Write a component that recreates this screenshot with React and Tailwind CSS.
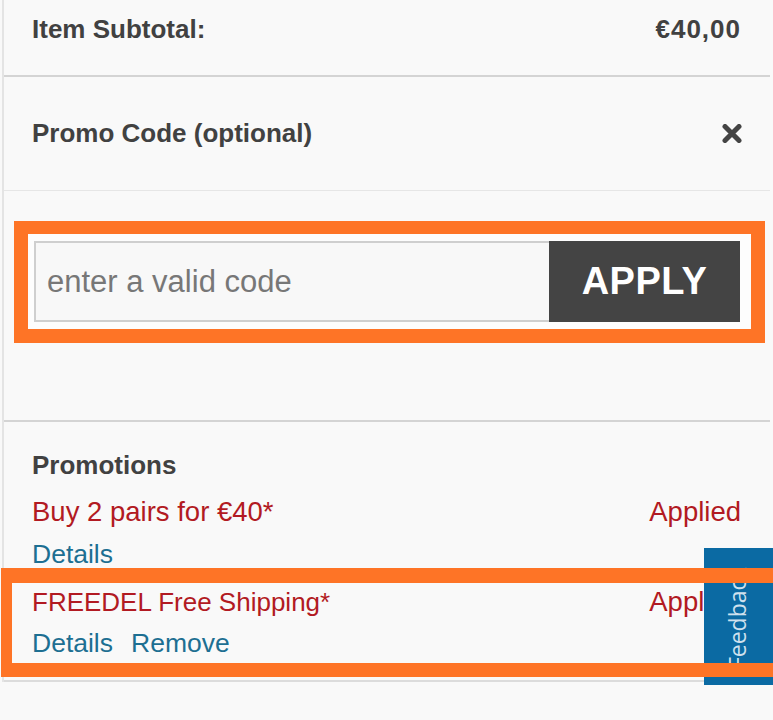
function CloseIcon() {
  return (
    <svg width="20" height="19" viewBox="0 0 20 19" className="block">
      <path
        d="M3 2.5 L17 16.5 M17 2.5 L3 16.5"
        stroke="#444444"
        strokeWidth="5"
        strokeLinecap="round"
      />
    </svg>
  );
}

export default function App() {
  return (
    <div className="relative h-[720px] w-full overflow-hidden bg-[#f9f9f9] font-['Liberation_Sans',Arial,sans-serif]">
      <div className="ml-[2px] mr-[3px] border-l-2 border-[#e4e4e4]">
        {/* subtotal */}
        <div className="flex h-[75px] items-start justify-between pl-[28px] pr-[29px] pt-[13px] text-[26px] font-bold leading-[32px] text-[#414141]">
          <span>Item Subtotal:</span>
          <span className="tracking-[1px]">€40,00</span>
        </div>
        <div className="h-[2px] bg-[#d4d4d4]" />

        {/* promo code header */}
        <div className="flex h-[113px] items-center justify-between pl-[28px] pr-[28px] text-[26px] font-bold text-[#414141]">
          <span>Promo Code (optional)</span>
          <CloseIcon />
        </div>
        <div className="h-[1px] bg-[#e6e6e6]" />

        {/* code input */}
        <div className="h-[229px] pt-[30px]">
          <div className="ml-[10px] mr-[5px] border-[14px] border-t-[13px] border-[#fe7426] bg-[#fdfdfd] py-[7px] pl-[6px] pr-[11px]">
            <div className="flex h-[81px]">
              <input
                placeholder="enter a valid code"
                className="h-full min-w-0 flex-1 border-2 border-r-0 border-[#cfcfcf] bg-[#f8f8f8] pl-[11px] text-[31px] text-[#555] outline-none placeholder:text-[#777777]"
              />
              <button className="h-full w-[191px] bg-[#444444] text-[38px] font-bold tracking-[0.5px] text-white">
                APPLY
              </button>
            </div>
          </div>
        </div>
        <div className="h-[2px] bg-[#d4d4d4]" />

        {/* promotions */}
        <div className="pl-[28px] pr-[29px] pt-[23px] text-[27.5px]">
          <div className="flex h-[40px] items-center text-[26px] font-bold text-[#414141]">
            Promotions
          </div>
          <div className="flex h-[54px] items-center justify-between text-[#b21a22]">
            <span>Buy 2 pairs for €40*</span>
            <span>Applied</span>
          </div>
          <div className="flex h-[32px] items-center text-[26.5px] text-[#1d6f92]">
            <span>Details</span>
          </div>

          <div className="relative -ml-[31px] -mr-[29px] -mt-[3px] pb-[14px] pl-[11px] pr-[29px] pt-[15px]">
            <div className="pl-[20px]">
              <div className="flex h-[38px] items-center justify-between text-[#b21a22]">
                <span className="text-[26px]">FREEDEL Free Shipping*</span>
                <span>Applied</span>
              </div>
              <div className="flex h-[42px] items-center gap-[18px] pt-[3px] text-[26.5px] text-[#1d6f92]">
                <span>Details</span>
                <span>Remove</span>
              </div>
            </div>
            <div className="pointer-events-none absolute -right-[40px] bottom-0 left-0 top-0 z-20 border-[#fe7426] border-b-[14px] border-l-[11px] border-r-[14px] border-t-[15px]" />
          </div>
        </div>
        <div className="mt-[3px] h-[2px] bg-[#dcdcdc]" />
      </div>

      {/* feedback tab */}
      <div className="absolute right-0 top-[548px] z-10 flex h-[137px] w-[69px] items-center justify-center bg-[#0b6aa3] pr-[4px] pt-[3px]">
        <span className="block -rotate-90 whitespace-nowrap font-['Open_Sans',sans-serif] text-[23px] text-[#cfe1ee]">
          Feedback
        </span>
      </div>
    </div>
  );
}
